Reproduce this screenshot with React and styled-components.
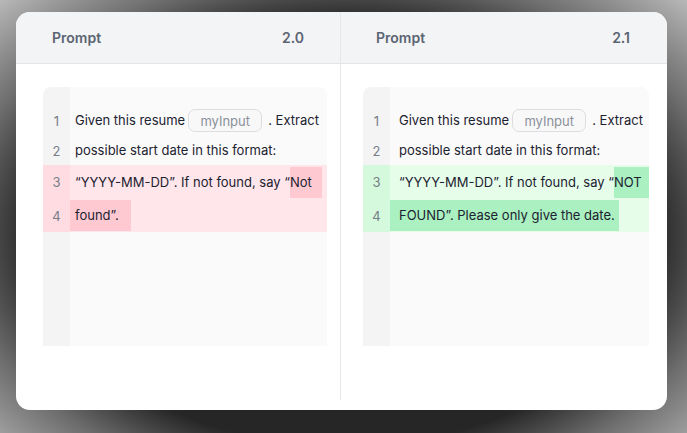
import React from "react";
import styled, { createGlobalStyle } from "styled-components";

const Global = createGlobalStyle`
  html, body { margin: 0; padding: 0; background: #ffffff; }
  body { font-family: Inter, "Noto Sans", sans-serif; -webkit-font-smoothing: antialiased; }
`;

const Stage = styled.div`
  width: 687px;
  height: 433px;
  box-sizing: border-box;
  padding: 12px 20px 23px 16px;
  background: radial-gradient(ellipse at 50% 54%, #262626 64%, #6e6e6e 80%, #b8b8b8 100%);
`;

const Card = styled.div`
  width: 651px;
  height: 398px;
  box-sizing: border-box;
  padding-bottom: 10px;
  background: #ffffff;
  border-radius: 14px;
  overflow: hidden;
  display: grid;
  grid-template-columns: 325px 326px;
`;

const Column = styled.div`
  display: flex;
  flex-direction: column;
  border-right: ${(p) => (p.$divider ? "1px solid #e6e7ea" : "none")};
`;

const Header = styled.div`
  height: 52px;
  flex: none;
  box-sizing: border-box;
  background: #f3f4f6;
  border-bottom: 1px solid #e2e4e8;
  display: flex;
  align-items: center;
  justify-content: space-between;
  padding: 0 ${(p) => p.$pr}px 0 ${(p) => p.$pl}px;
  font-size: 14px;
  font-weight: 600;
  color: #5b6472;
`;

const Body = styled.div`
  flex: 1;
  padding: 23px ${(p) => p.$pr}px 0 ${(p) => p.$pl}px;
`;

const Editor = styled.div`
  height: 259px;
  border-radius: 8px 8px 0 0;
  padding-top: 18px;
  box-sizing: border-box;
  background: linear-gradient(to right, #f4f4f5 27px, #fafafa 27px);
  display: flex;
  flex-direction: column;
  font-size: 13px;
  color: #1c2230;
`;

const Row = styled.div`
  height: ${(p) => p.$h}px;
  flex: none;
  display: flex;
  align-items: center;
  background: ${(p) => p.$bg || "transparent"};
`;

const Num = styled.div`
  width: 27px;
  flex: none;
  align-self: stretch;
  display: flex;
  align-items: center;
  justify-content: center;
  color: #777d87;
  background: ${(p) => p.$bg || "transparent"};
`;

const Line = styled.div`
  flex: 1;
  display: flex;
  align-items: center;
  white-space: pre;
  padding-left: ${(p) => p.$pl}px;
`;

const Seg = styled.span`
  display: inline-block;
  line-height: 31px;
  padding: 0 ${(p) => p.$r || 0}px 0 ${(p) => p.$l || 0}px;
  background: ${(p) => p.$hl || "transparent"};
  flex: ${(p) => (p.$grow ? 1 : "none")};
`;

const Chip = styled.span`
  display: inline-flex;
  align-items: center;
  justify-content: center;
  width: 74px;
  height: 23px;
  box-sizing: border-box;
  margin: 0 6px 0 3px;
  border: 1px solid #dcdde0;
  border-radius: 7px;
  background: #f8f8f9;
  color: #8b9099;
  font-size: 13px;
`;

const PINK = { row: "#ffe6ea", gutter: "#ffdce2", hl: "#ffc9d2" };
const GREEN = { row: "#e6fdea", gutter: "#d4f9dc", hl: "#aaf0c0" };

function Panel({ version, divider, hpl, hpr, bpl, bpr, textPl, diff }) {
  const c = diff === "old" ? PINK : GREEN;
  return (
    <Column $divider={divider}>
      <Header $pl={hpl} $pr={hpr}>
        <span>Prompt</span>
        <span>{version}</span>
      </Header>
      <Body $pl={bpl} $pr={bpr}>
        <Editor>
          <Row $h={31}>
            <Num>1</Num>
            <Line $pl={textPl}>
              <Seg>Given this resume</Seg>
              <Chip>myInput</Chip>
              <Seg>. Extract</Seg>
            </Line>
          </Row>
          <Row $h={29}>
            <Num>2</Num>
            <Line $pl={textPl}>
              <Seg>possible start date in this format:</Seg>
            </Line>
          </Row>
          <Row $h={34} $bg={c.row}>
            <Num $bg={c.gutter}>3</Num>
            <Line $pl={textPl}>
              <Seg>“YYYY-MM-DD”. If not found, say “</Seg>
              {diff === "old" ? (
                <Seg $hl={c.hl} $r={10}>Not</Seg>
              ) : (
                <Seg $hl={c.hl} $grow>NOT</Seg>
              )}
            </Line>
          </Row>
          <Row $h={33} $bg={c.row}>
            <Num $bg={c.gutter}>4</Num>
            <Line $pl={0}>
              {diff === "old" ? (
                <Seg $hl={c.hl} $l={textPl} $r={12}>found”.</Seg>
              ) : (
                <Seg $hl={c.hl} $l={textPl} $r={4}>FOUND”. Please only give the date.</Seg>
              )}
            </Line>
          </Row>
        </Editor>
      </Body>
    </Column>
  );
}

export default function App() {
  return (
    <>
      <Global />
      <Stage>
        <Card>
          <Panel version="2.0" divider hpl={36} hpr={36} bpl={27} bpr={13} textPl={5} diff="old" />
          <Panel version="2.1" hpl={35} hpr={37} bpl={22} bpr={18} textPl={9} diff="new" />
        </Card>
      </Stage>
    </>
  );
}
